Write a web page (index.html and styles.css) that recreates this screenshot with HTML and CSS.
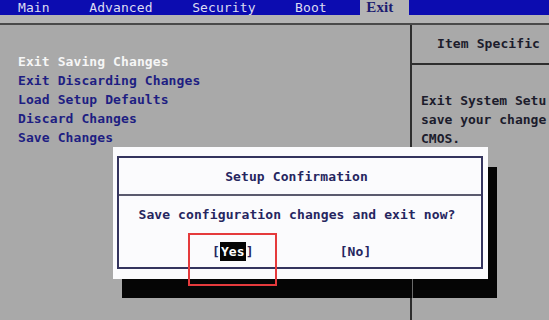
FILE: index.html
```html
<!DOCTYPE html>
<html>
<head>
<meta charset="utf-8">
<link rel="stylesheet" href="styles.css">
</head>
<body>
<div class="screen">
  <nav class="menubar">
    <span class="tab">Main</span>
    <span class="tab">Advanced</span>
    <span class="tab">Security</span>
    <span class="tab">Boot</span>
    <span class="tab tab-active">Exit</span>
  </nav>
  <div class="band"></div>
  <main class="content">
    <ul class="options">
      <li class="opt opt-selected">Exit Saving Changes</li>
      <li class="opt">Exit Discarding Changes</li>
      <li class="opt">Load Setup Defaults</li>
      <li class="opt">Discard Changes</li>
      <li class="opt">Save Changes</li>
    </ul>
    <aside class="help">
      <div class="help-head">Item Specific</div>
      <div class="help-body">
        <div class="help-line">Exit System Setu</div>
        <div class="help-line">save your change</div>
        <div class="help-line">CMOS.</div>
      </div>
    </aside>
  </main>

  <div class="dlg-shadow"></div>
  <div class="dialog">
    <div class="dlg-inner">
      <div class="dlg-title">Setup Confirmation</div>
      <div class="dlg-msg">Save configuration changes and exit now?</div>
      <div class="dlg-buttons">
        <span class="btn btn-yes">[<span class="hl">Yes</span>]</span>
        <span class="btn btn-no">[No]</span>
      </div>
    </div>
  </div>
  <div class="marker"></div>
</div>
</body>
</html>
```
FILE: styles.css
```css
html, body {
  margin: 0;
  padding: 0;
}
body {
  width: 549px;
  height: 320px;
  overflow: hidden;
  background: #a9a9a9;
  font-family: "DejaVu Sans Mono", "Liberation Mono", monospace;
  font-weight: bold;
  font-size: 13px;
  letter-spacing: 0.1px;
}
.screen {
  position: relative;
  width: 549px;
  height: 320px;
  overflow: hidden;
  display: flex;
  flex-direction: column;
}
.menubar {
  height: 15px;
  background: #0c0cb0;
  display: flex;
  gap: 17.5px;
  padding-left: 12px;
  line-height: 15px;
}
.tab {
  padding: 0 16px 0 6px;
  color: #dcdcf2;
  font-weight: normal;
}
.tab-active {
  background: #b4b4b4;
  color: #1c1c70;
  font-family: "Liberation Serif", serif;
  font-weight: bold;
  font-size: 15px;
}
.band {
  height: 8px;
  background: #b4b4b4;
  border-bottom: 2px solid #4a4a4a;
}
.content {
  flex: 1;
  display: grid;
  grid-template-columns: 412px 1fr;
}
.options {
  list-style: none;
  margin: 0;
  padding: 27px 0 0 18px;
  border-right: 2px solid #2e2e2e;
}
.opt {
  line-height: 19px;
  height: 19px;
  color: #1e1e82;
  white-space: nowrap;
}
.opt-selected {
  color: #f6f6f6;
}
.help {
  overflow: hidden;
  color: #1c1c2c;
}
.help-head {
  height: 38px;
  line-height: 38px;
  padding-left: 25px;
  border-bottom: 2px solid #2e2e2e;
  white-space: nowrap;
}
.help-body {
  padding: 26px 0 0 9px;
  letter-spacing: 0;
}
.help-line {
  line-height: 19px;
  height: 19px;
  white-space: nowrap;
}
.dlg-shadow {
  position: absolute;
  left: 122px;
  top: 167px;
  width: 375px;
  height: 131px;
  background: #050505;
}
.dlg-shadow::after {
  content: "";
  position: absolute;
  left: 290px;
  top: 0;
  width: 1px;
  height: 100%;
  background: #6a6a6a;
}
.dialog {
  position: absolute;
  left: 113px;
  top: 147px;
  width: 375px;
  height: 132px;
  box-sizing: border-box;
  padding: 9px 5px 10px 4px;
  background: #fbfbfd;
}
.dlg-inner {
  height: 100%;
  box-sizing: border-box;
  border: 2px solid #34345e;
  color: #262660;
  display: flex;
  flex-direction: column;
}
.dlg-title {
  height: 36px;
  line-height: 38px;
  text-align: center;
  border-bottom: 2px solid #5a5a6e;
  padding-right: 7px;
}
.dlg-msg {
  height: 38px;
  line-height: 38px;
  text-align: center;
  padding-right: 6px;
}
.dlg-buttons {
  display: flex;
  padding-left: 93px;
  padding-top: 8px;
  line-height: 19px;
}
.btn {
  white-space: nowrap;
}
.btn-no {
  margin-left: 86px;
}
.hl {
  background: #050505;
  color: #ffffff;
  padding: 2px 1px;
}
.marker {
  position: absolute;
  left: 188px;
  top: 233px;
  width: 85px;
  height: 49px;
  border: 2px solid #e53a3c;
}
```
